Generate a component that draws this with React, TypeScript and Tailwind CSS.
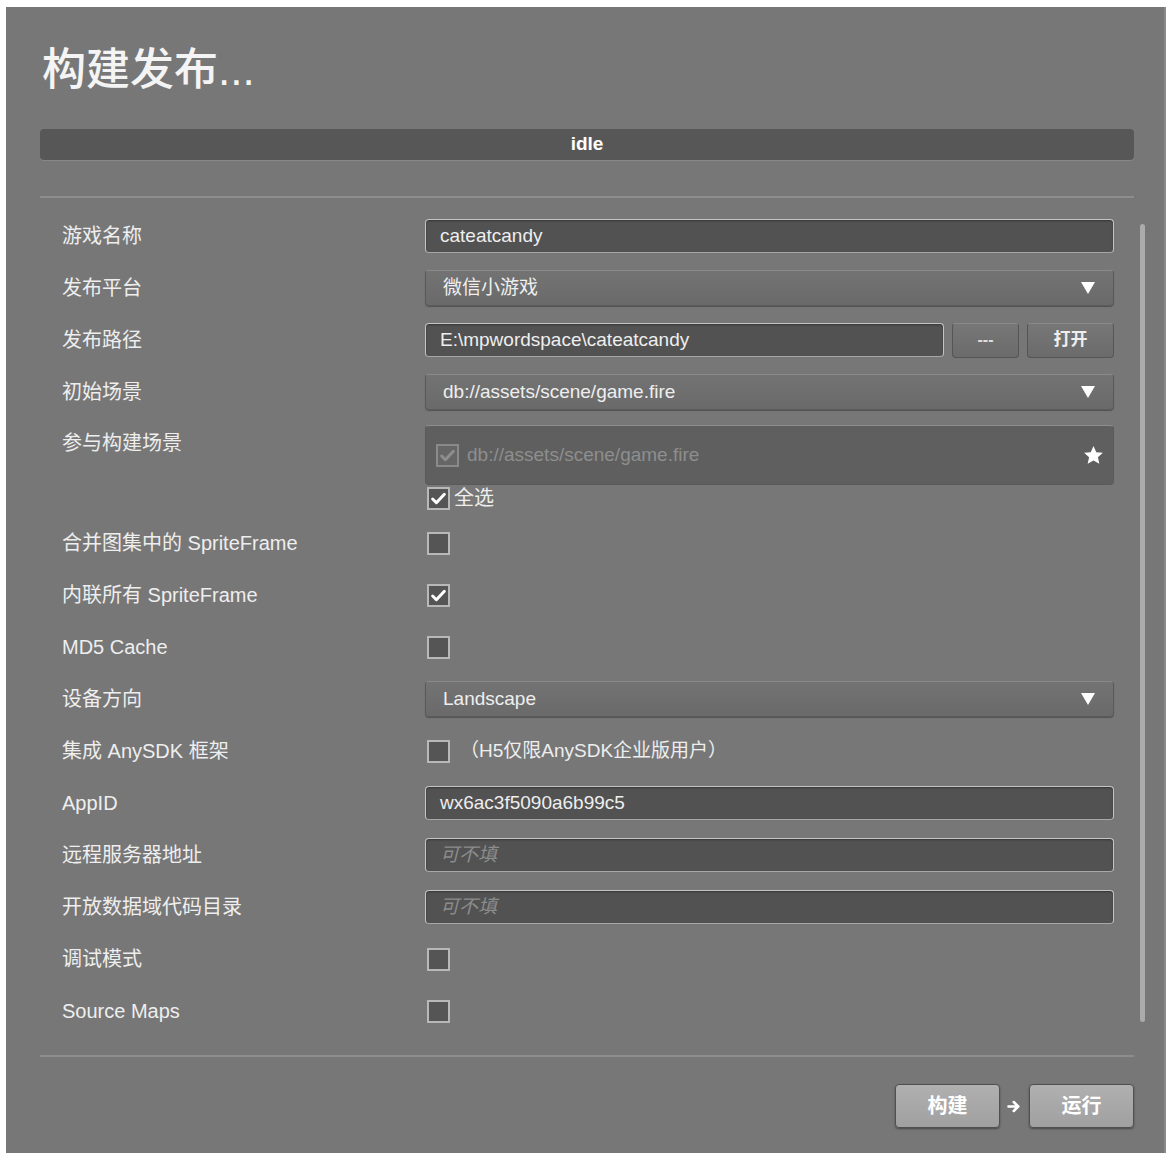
import React from "react";

const font = { fontFamily: '"Liberation Sans", "Noto Sans CJK SC", sans-serif' };

function Check({ checked, faded }: { checked?: boolean; faded?: boolean }) {
  return (
    <div
      className={
        "w-[23px] h-[23px] flex items-center justify-center border-2 " +
        (faded ? "border-[#8a8a8a] bg-[#666]" : "border-[#b8b8b8] bg-[#555]")
      }
    >
      {checked && (
        <svg viewBox="0 0 16 16" className="w-[17px] h-[17px]">
          <path
            d="M2.5 8.5l3.5 3.5 7.5-8"
            fill="none"
            stroke={faded ? "#8e8e8e" : "#fff"}
            strokeWidth={2.8}
            strokeLinecap="round"
            strokeLinejoin="round"
          />
        </svg>
      )}
    </div>
  );
}

function Arrow() {
  return (
    <svg viewBox="0 0 14 12" className="w-[14px] h-[12px]">
      <path d="M0 0h14L7 12z" fill="#fff" />
    </svg>
  );
}

function Input({ value, placeholder }: { value?: string; placeholder?: string }) {
  return (
    <div className="h-[34px] w-full rounded-[4px] border border-[#c4c4c4] border-b-[#a8a8a8] bg-[#525252] flex items-center px-[14px] shadow-[inset_0_1px_2px_rgba(0,0,0,0.35)]">
      {value ? (
        <span className="text-[19px] text-[#eee]">{value}</span>
      ) : (
        <span className="text-[19px] text-[#8c8c8c] italic">{placeholder}</span>
      )}
    </div>
  );
}

function Select({ value }: { value: string }) {
  return (
    <div className="h-[36px] w-full rounded-[4px] border border-[#5a5a5a] border-t-[#8a8a8a] bg-gradient-to-b from-[#737373] to-[#6a6a6a] flex items-center justify-between pl-[17px] pr-[18px] shadow-[0_1px_1px_rgba(0,0,0,0.3)]">
      <span className="text-[19px] text-[#eee]">{value}</span>
      <Arrow />
    </div>
  );
}

function Label({ children }: { children: React.ReactNode }) {
  return <div className="w-[363px] shrink-0 text-[20px] text-[#eee]">{children}</div>;
}

function Row({ label, children }: { label: React.ReactNode; children: React.ReactNode }) {
  return (
    <div className="h-[52px] flex items-center">
      <Label>{label}</Label>
      <div className="w-[689px] flex items-center">{children}</div>
    </div>
  );
}

export default function App() {
  return (
    <div className="w-[1172px] h-[1161px] bg-white pt-[7px] pl-[6px] pr-[6px] pb-[8px]" style={font}>
      <div className="h-full bg-[#777777] border-r-2 border-[#8a8a8a] pl-[34px] pr-[30px] flex flex-col">
        <div className="mt-[33px] h-[60px] pl-[2px] flex items-center text-[44px] font-medium text-[#f4f4f4]">
          构建发布...
        </div>
        <div className="mt-[29px] h-[31px] rounded-[4px] bg-[#575757] flex items-center justify-center shadow-[0_1px_0_rgba(255,255,255,0.12)]">
          <span className="text-[19px] font-bold text-white">idle</span>
        </div>
        <div className="mt-[36px] h-[2px] bg-[#8d8d8d]" />

        <div className="flex w-[1105px] mt-[12px]">
          <div className="pl-[22px] flex flex-col">
            <Row label="游戏名称">
              <Input value="cateatcandy" />
            </Row>
            <Row label="发布平台">
              <Select value="微信小游戏" />
            </Row>
            <Row label="发布路径">
              <div className="flex-1">
                <Input value="E:\mpwordspace\cateatcandy" />
              </div>
              <div className="ml-[8px] w-[67px] h-[35px] rounded-[4px] border border-[#555] border-t-[#8a8a8a] bg-gradient-to-b from-[#777] to-[#6b6b6b] flex items-center justify-center text-[#ddd] text-[16px] font-bold">
                ---
              </div>
              <div className="ml-[8px] w-[87px] h-[35px] rounded-[4px] border border-[#555] border-t-[#8a8a8a] bg-gradient-to-b from-[#777] to-[#6b6b6b] flex items-center justify-center text-[#eee] text-[17px] font-bold">
                打开
              </div>
            </Row>
            <Row label="初始场景">
              <Select value="db://assets/scene/game.fire" />
            </Row>
            <div className="h-[99px] flex">
              <div className="pt-[10px]">
                <Label>参与构建场景</Label>
              </div>
              <div className="w-[689px] pt-[7px] flex flex-col">
                <div className="h-[60px] rounded-[4px] border border-[#5a5a5a] border-t-[#8c8c8c] bg-[#5f5f5f] flex items-center justify-between pl-[10px] pr-[8px]">
                  <div className="flex items-center gap-[8px]">
                    <Check checked faded />
                    <span className="text-[19px] text-[#8e8e8e]">db://assets/scene/game.fire</span>
                  </div>
                  <svg viewBox="0 0 24 24" className="w-[23px] h-[23px]">
                    <path
                      d="M12 2.2l2.9 6.3 6.9.7-5.2 4.6 1.5 6.8L12 17.1l-6.1 3.5 1.5-6.8-5.2-4.6 6.9-.7z"
                      fill="#fff"
                    />
                  </svg>
                </div>
                <div className="-mt-[2px] flex items-center gap-[4px] pl-[2px]">
                  <Check checked />
                  <span className="text-[20px] text-[#eee]">全选</span>
                </div>
              </div>
            </div>
            <Row label="合并图集中的 SpriteFrame">
              <div className="pl-[2px]">
                <Check />
              </div>
            </Row>
            <Row label="内联所有 SpriteFrame">
              <div className="pl-[2px]">
                <Check checked />
              </div>
            </Row>
            <Row label="MD5 Cache">
              <div className="pl-[2px]">
                <Check />
              </div>
            </Row>
            <Row label="设备方向">
              <Select value="Landscape" />
            </Row>
            <Row label="集成 AnySDK 框架">
              <div className="pl-[2px] flex items-center gap-[10px]">
                <Check />
                <span className="text-[19px] text-[#eee]">（H5仅限AnySDK企业版用户）</span>
              </div>
            </Row>
            <Row label="AppID">
              <Input value="wx6ac3f5090a6b99c5" />
            </Row>
            <Row label="远程服务器地址">
              <Input placeholder="可不填" />
            </Row>
            <Row label="开放数据域代码目录">
              <Input placeholder="可不填" />
            </Row>
            <Row label="调试模式">
              <div className="pl-[2px]">
                <Check />
              </div>
            </Row>
            <Row label="Source Maps">
              <div className="pl-[2px]">
                <Check />
              </div>
            </Row>
          </div>
          <div className="ml-[26px] mt-[14px] w-[5px] h-[798px] rounded-full bg-[#ababab]" />
        </div>

        <div className="mt-[18px] h-[2px] bg-[#8d8d8d]" />
        <div className="mt-[27px] flex items-center justify-end">
          <div className="w-[105px] h-[44px] rounded-[4px] border border-[#505050] bg-gradient-to-b from-[#b0b0b0] to-[#a0a0a0] flex items-center justify-center text-[20px] font-bold text-white shadow-[0_1px_2px_rgba(0,0,0,0.4)]">
            构建
          </div>
          <svg viewBox="0 0 20 20" className="mx-[7px] w-[15px] h-[15px]">
            <path d="M2 10h12M9 4l6 6-6 6" fill="none" stroke="#fff" strokeWidth={3.4} strokeLinecap="round" strokeLinejoin="round" />
          </svg>
          <div className="w-[105px] h-[44px] rounded-[4px] border border-[#505050] bg-gradient-to-b from-[#b0b0b0] to-[#a0a0a0] flex items-center justify-center text-[20px] font-bold text-white shadow-[0_1px_2px_rgba(0,0,0,0.4)]">
            运行
          </div>
        </div>
      </div>
    </div>
  );
}
